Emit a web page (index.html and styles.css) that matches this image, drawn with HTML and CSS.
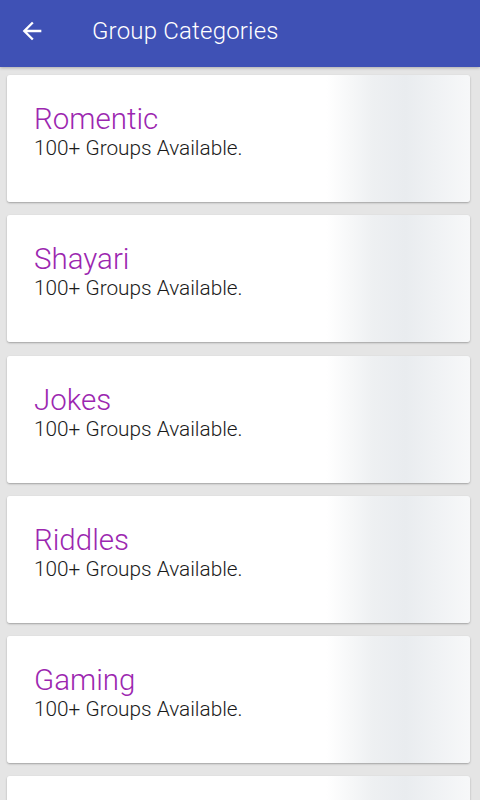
FILE: index.html
```html
<!DOCTYPE html>
<html lang="en">
<head>
  <meta charset="UTF-8">
  <meta name="viewport" content="width=device-width, initial-scale=1.0">
  <title>Group Categories</title>
  <link rel="stylesheet" href="styles.css">
</head>
<body>
  <header class="toolbar">
    <button type="button" class="back-btn" aria-label="Back">
      <svg width="24" height="24" viewBox="0 0 24 24">
        <path d="M20 11H7.83l5.59-5.59L12 4l-8 8 8 8 1.41-1.41L7.83 13H20v-2z" fill="#fff"/>
      </svg>
    </button>
    <h1>Group Categories</h1>
  </header>

  <div class="card-list">
    <div class="card">
      <div class="card-title">Romentic</div>
      <div class="card-sub">100+ Groups Available.</div>
    </div>
    <div class="card">
      <div class="card-title">Shayari</div>
      <div class="card-sub">100+ Groups Available.</div>
    </div>
    <div class="card">
      <div class="card-title">Jokes</div>
      <div class="card-sub">100+ Groups Available.</div>
    </div>
    <div class="card">
      <div class="card-title">Riddles</div>
      <div class="card-sub">100+ Groups Available.</div>
    </div>
    <div class="card">
      <div class="card-title">Gaming</div>
      <div class="card-sub">100+ Groups Available.</div>
    </div>
    <!-- next card only peeks in at the bottom -->
    <div class="card"></div>
  </div>
</body>
</html>
```

FILE: styles.css
```css
body {
  margin: 0;
  font-family: Roboto, "Liberation Sans", sans-serif;
  background-color: #e5e5e5;
  overflow: hidden;
}
.toolbar {
  height: 67px;
  box-sizing: border-box;
  padding-bottom: 6px;
  background-color: #3f51b5;
  display: flex;
  align-items: center;
  box-shadow: 0 1px 3px rgba(0, 0, 0, 0.25);
}
.back-btn {
  background: none;
  border: none;
  padding: 0;
  margin-left: 18px;
  width: 28px;
  height: 28px;
  display: flex;
  align-items: center;
  justify-content: center;
}
.back-btn svg {
  width: 28px;
  height: 28px;
}
.toolbar h1 {
  margin: 0 0 0 46px;
  color: #fff;
  font-size: 24px;
  font-weight: 300;
  letter-spacing: 0.2px;
}
.card-list {
  display: flex;
  flex-direction: column;
  gap: 13.3px;
  padding: 8px 10px 0 7px;
}
.card {
  flex: 0 0 auto;
  height: 127px;
  box-sizing: border-box;
  padding: 29px 0 0 27px;
  border-radius: 3px;
  background: linear-gradient(to right, #fff 69%, #eef0f2 79%, #e9ecef 86%, #f7f8f9 100%);
  box-shadow: 0 1px 2px rgba(0, 0, 0, 0.3);
}
.card-title {
  font-size: 29.5px;
  line-height: 31px;
  font-weight: 300;
  color: #9c27b0;
}
.card-sub {
  font-size: 20.8px;
  line-height: 26px;
  font-weight: 300;
  color: #1a1a1a;
}
```
